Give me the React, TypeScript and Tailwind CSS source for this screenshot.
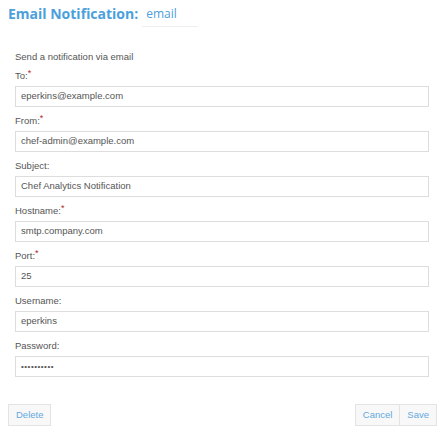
import React from 'react';

const fields = [
  { label: 'To:', value: 'eperkins@example.com', required: true },
  { label: 'From:', value: 'chef-admin@example.com', required: true },
  { label: 'Subject:', value: 'Chef Analytics Notification', required: false },
  { label: 'Hostname:', value: 'smtp.company.com', required: true },
  { label: 'Port:', value: '25', required: true },
  { label: 'Username:', value: 'eperkins', required: false },
  { label: 'Password:', value: '••••••••••', required: false, password: true },
];

const App = () => {
  return (
    <div className="w-[444px] h-[435px] bg-white font-['Liberation_Sans',Arial,sans-serif] text-[9.5px] text-[#555]">
      <div className="flex items-start pl-2 pt-[4px]">
        <h1 className="font-['Open_Sans',sans-serif] font-bold text-[14px] leading-[20px] text-[#4ba0dc]">Email Notification:</h1>
        <div className="ml-[4px] mt-[1px] w-[56px] border-b border-[#eee] pb-[4px] pl-1 text-[12px] leading-[17px] text-[#4ba0dc] font-['Open_Sans',sans-serif]">
          email
        </div>
      </div>

      <div className="px-[15px] pt-[23px]">
        <p className="leading-[14px] mb-[5px]">Send a notification via email</p>
        {fields.map((f) => (
          <div key={f.label} className="mb-[7px]">
            <div className="leading-[14px] mb-[3px]">
              {f.label}
              {f.required && <span className="text-[#b0282a] relative -top-[3px] text-[9px]">*</span>}
            </div>
            <div className="h-[21px] border border-[#ddd] flex items-center pl-[5px] text-[#555]">
              {f.password ? <span className="text-[8px] tracking-[0.5px]">{f.value}</span> : f.value}
            </div>
          </div>
        ))}
      </div>

      <div className="flex justify-between pl-2 pr-[7px] pt-[20px]">
        <button className="h-[22px] px-[7px] border border-[#e3e3e3] bg-[#f8f8f8] text-[#62a9e0] text-[9.5px] leading-[20px]">Delete</button>
        <div className="flex">
          <button className="h-[22px] px-[7px] border border-[#e3e3e3] bg-[#f8f8f8] text-[#62a9e0] text-[9.5px] leading-[20px]">Cancel</button>
          <button className="h-[22px] px-[7px] border border-l-0 border-[#e3e3e3] bg-[#f8f8f8] text-[#62a9e0] text-[9.5px] leading-[20px]">Save</button>
        </div>
      </div>
    </div>
  );
};

export default App;
